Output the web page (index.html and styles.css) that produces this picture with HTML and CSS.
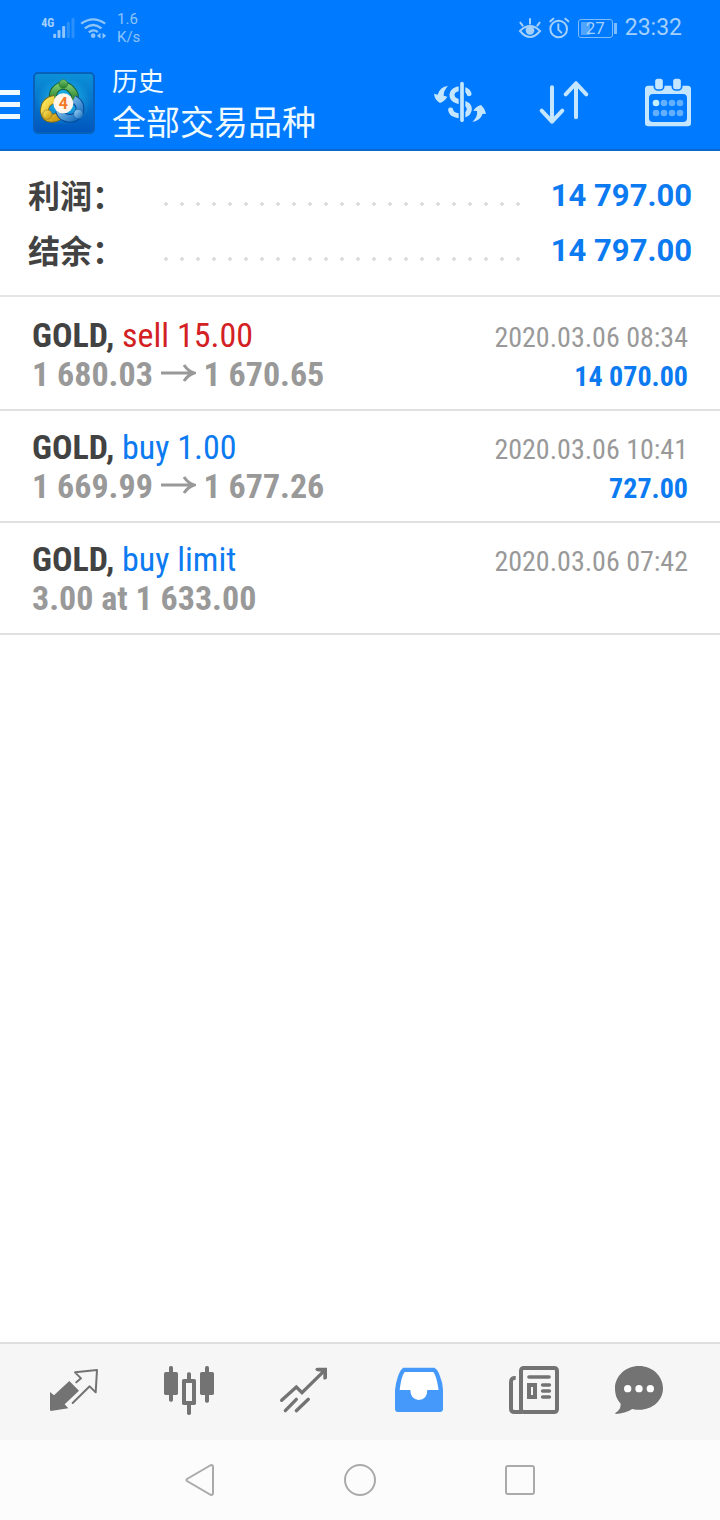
FILE: index.html
```html
<!DOCTYPE html>
<html lang="zh-CN">
<head>
<meta charset="utf-8">
<meta name="viewport" content="width=device-width, initial-scale=1">
<title>历史</title>
<link rel="stylesheet" href="styles.css">
</head>
<body>
<div class="screen">
  <header class="top">
    <div class="status">
      <div class="status-left">
        <svg class="status-signal" viewBox="120 48 200 66" width="67" height="22" aria-hidden="true">
          <g fill="#8fc4f8">
            <rect x="159" y="98" width="9" height="13" rx="3"/><rect x="172" y="87" width="9" height="24" rx="3"/><rect x="186" y="75" width="9" height="36" rx="3"/>
            <g opacity=".3"><rect x="200" y="63" width="9" height="48" rx="3"/><rect x="214" y="51" width="9" height="60" rx="3"/></g>
            <circle cx="279" cy="104" r="7"/>
            <path d="M290 104l11-9v18zM318 104l-11-9v18z"/>
          </g>
          <g fill="none" stroke="#8fc4f8" stroke-width="7"><path d="M243 68q36-26 72 0M254 82q25-20 50 0M266 94q13-11 27-1"/></g>
          <text class="net-type" x="123" y="78">4G</text>
        </svg>
        <div class="speed"><span>1.6</span><span>K/s</span></div>
      </div>
      <div class="status-right">
        <svg viewBox="291 51 156 66" width="52" height="22" aria-hidden="true">
          <g fill="none" stroke="#a4d0fa" stroke-width="6" stroke-linecap="round">
            <path d="M297 93q30-30 60 0q-30 36-60 0zM327 71V57M305 77l-7-9M349 77l7-9"/>
            <circle cx="413" cy="87" r="25"/><path d="M412 73v16l9 9M388 64l9-8M442 64l-9-8"/>
          </g>
          <circle cx="327" cy="91" r="13" fill="#a4d0fa"/>
        </svg>
        <div class="battery"><span>27</span></div>
        <time class="clock">23:32</time>
      </div>
    </div>
    <div class="appbar">
      <button class="menu" aria-label="菜单"><svg viewBox="0 0 20 30" width="20" height="30"><path fill="#effaff" d="M0 0h20v5H0zM0 12h20v5H0zM0 24h20v5H0z"/></svg></button>
      <svg class="logo" viewBox="0 0 186 186" width="62" height="62" aria-hidden="true">
        <defs>
          <linearGradient id="bg" x2="0" y2="1"><stop stop-color="#0b91d8"/><stop offset="1" stop-color="#0055bd"/></linearGradient>
          <radialGradient id="glow"><stop stop-color="#25c5ee"/><stop offset="1" stop-color="#25c5ee" stop-opacity="0"/></radialGradient>
          <linearGradient id="green" x2="0" y2="1"><stop stop-color="#76c66a"/><stop offset="1" stop-color="#237b28"/></linearGradient>
          <linearGradient id="gold" x2="1" y2="1"><stop stop-color="#ffe95d"/><stop offset="1" stop-color="#c7920a"/></linearGradient>
          <linearGradient id="blue" x2="1" y2="1"><stop stop-color="#a3d8f5"/><stop offset="1" stop-color="#1169be"/></linearGradient>
        </defs>
        <rect x="3" y="3" width="180" height="180" rx="12" fill="url(#bg)" stroke="#0860b8" stroke-width="6"/>
        <ellipse cx="92" cy="88" rx="82" ry="72" fill="url(#glow)"/>
        <path d="M61 84q-7-28 20-42q23-3 34 11q15 15 9 33" fill="none" stroke="#155d35" stroke-width="24"/>
        <path d="M61 84q-7-28 20-42q23-3 34 11q15 15 9 33" fill="none" stroke="url(#green)" stroke-width="18"/>
        <path d="M65 82q-30 5-31 36q3 20 21 21q24 0 31-21" fill="none" stroke="#806d15" stroke-width="26"/>
        <path d="M65 82q-30 5-31 36q3 20 21 21q24 0 31-21" fill="none" stroke="url(#gold)" stroke-width="21"/>
        <path d="M122 82q24 12 18 38q-10 20-32 19q-23-2-29-23" fill="none" stroke="#064796" stroke-width="26"/>
        <path d="M122 82q24 12 18 38q-10 20-32 19q-23-2-29-23" fill="none" stroke="url(#blue)" stroke-width="20"/>
        <circle cx="91" cy="36" r="13" fill="url(#green)" stroke="#357a3d" stroke-width="2"/>
        <circle cx="43" cy="128" r="14" fill="url(#gold)" stroke="#907a25" stroke-width="2"/>
        <circle cx="136" cy="126" r="14" fill="url(#blue)" stroke="#1664a8" stroke-width="2"/>
        <circle cx="91" cy="94" r="30" fill="#fff5eb"/>
        <text class="logo-digit" x="91" y="111">4</text>
      </svg>
      <div class="titles">
        <h1 class="title">历史</h1>
        <p class="subtitle">全部交易品种</p>
      </div>
      <div class="actions">
        <button class="action" aria-label="货币">
          <svg viewBox="36 234 168 144" width="56" height="48">
            <path fill="none" stroke="#c4e6ff" stroke-width="15" stroke-linecap="round" d="M147 281C142 262 98 260 96 284C95 314 148 299 148 327C146 355 96 353 92 330"/>
            <path d="M126 254V358" stroke="#007aff" stroke-width="20"/>
            <path d="M126 251V361" stroke="#c4e6ff" stroke-width="11" stroke-linecap="round"/>
            <path fill="#c4e6ff" d="M84 258Q60 260 53 284L42 281Q44 300 60 309Q75 303 82 290L71 287Q71 271 84 258zM157 366Q174 350 171 333L160 332Q169 318 183 315Q195 326 198 342L188 341Q181 362 157 366z"/>
          </svg>
        </button>
        <button class="action" aria-label="排序">
          <svg viewBox="354 234 156 144" width="52" height="48">
            <path fill="none" stroke="#c4e6ff" stroke-width="12" stroke-linecap="round" stroke-linejoin="round" d="M396 262V365M365 332L396 365L427 332M468 352V250M437 283L468 250L499 283"/>
          </svg>
        </button>
        <button class="action" aria-label="日期">
          <svg viewBox="672 231 144 147" width="48" height="49">
            <rect x="675" y="254" width="138" height="122" rx="10" fill="#c4e6ff"/>
            <rect x="687" y="279" width="114" height="84" rx="12" fill="#007aff"/>
            <g fill="#c4e6ff" stroke="#007aff" stroke-width="5"><rect x="703" y="231" width="28" height="36" rx="10"/><rect x="757" y="231" width="28" height="36" rx="10"/></g>
            <circle cx="708" cy="306" r="10" fill="#c4efff"/>
            <g fill="#62b0ff"><circle cx="732" cy="306" r="10"/><circle cx="756" cy="306" r="10"/><circle cx="780" cy="306" r="10"/><circle cx="708" cy="336" r="10"/><circle cx="732" cy="336" r="10"/><circle cx="756" cy="336" r="10"/><circle cx="780" cy="336" r="10"/></g>
          </svg>
        </button>
      </div>
    </div>
  </header>

  <main class="content">
    <dl class="summary">
      <div class="summary-row"><dt>利润：</dt><dd>14 797.00</dd></div>
      <div class="summary-row"><dt>结余：</dt><dd>14 797.00</dd></div>
    </dl>
    <ul class="deals">
      <li class="deal">
        <div class="line"><span class="name"><b>GOLD,</b> <span class="sell">sell 15.00</span></span><time class="date">2020.03.06 08:34</time></div>
        <div class="line"><span class="price">1 680.03 <svg class="arrow" viewBox="0 0 35 22" width="35" height="22" role="img" aria-label="→"><path d="M0 9H33M23 1Q27 7 33 9Q27 11 23 17"/></svg> 1 670.65</span><span class="profit">14 070.00</span></div>
      </li>
      <li class="deal">
        <div class="line"><span class="name"><b>GOLD,</b> <span class="buy">buy 1.00</span></span><time class="date">2020.03.06 10:41</time></div>
        <div class="line"><span class="price">1 669.99 <svg class="arrow" viewBox="0 0 35 22" width="35" height="22" role="img" aria-label="→"><path d="M0 9H33M23 1Q27 7 33 9Q27 11 23 17"/></svg> 1 677.26</span><span class="profit">727.00</span></div>
      </li>
      <li class="deal">
        <div class="line"><span class="name"><b>GOLD,</b> <span class="buy">buy limit</span></span><time class="date">2020.03.06 07:42</time></div>
        <div class="line"><span class="price">3.00 at 1 633.00</span></div>
      </li>
    </ul>
  </main>

  <nav class="tabs" aria-label="主导航">
    <button class="tab" aria-label="行情">
      <svg viewBox="144 108 156 150" width="52" height="50"><path fill="currentColor" d="M208 156L237 185L194 226L205 238L152 246L150 242V189L162 199z"/><path fill="none" stroke="currentColor" stroke-width="6" stroke-linejoin="round" stroke-linecap="round" d="M229 160L243 148L225 130L291 123L287 190L269 172L218 222"/></svg>
    </button>
    <button class="tab" aria-label="图表">
      <svg viewBox="489 105 156 153" width="52" height="51"><g fill="currentColor"><rect x="492" y="126" width="42" height="69" rx="5"/><rect x="507" y="108" width="12" height="107" rx="5"/><rect x="600" y="126" width="42" height="69" rx="5"/><rect x="615" y="108" width="12" height="110" rx="5"/><rect x="561" y="127" width="12" height="128" rx="5"/><rect x="546" y="147" width="42" height="78" rx="5"/></g><rect x="558" y="159" width="18" height="54" fill="#f6f6f6"/></svg>
    </button>
    <button class="tab" aria-label="交易">
      <svg viewBox="837 108 150 144" width="50" height="48"><path fill="none" stroke="currentColor" stroke-width="10" stroke-linecap="round" d="M845 211L889 171L906 188L974 121M856 242L889 208M889 242L925 208"/><path fill="currentColor" d="M946 117Q948 113 954 113H981V145Q976 151 970 147V126L952 124Q946 122 946 117z"/></svg>
    </button>
    <button class="tab active" aria-label="历史" aria-current="page">
      <svg viewBox="102 108 150 144" width="50" height="48"><path fill="currentColor" d="M130 113H223Q234 118 240 139Q249 160 249 180V238Q248 246 240 246H113Q105 245 105 237V180Q107 160 114 139Q121 118 130 113z"/><path fill="#fff" d="M134 126H220Q229 135 236 180H202Q202 209 176 210Q151 207 151 180H119Q124 138 134 126z"/></svg>
    </button>
    <button class="tab" aria-label="新闻">
      <svg viewBox="444 105 156 150" width="52" height="50"><g fill="none" stroke="currentColor" stroke-width="12"><rect x="483" y="114" width="108" height="132" rx="8"/><path d="M467 144Q453 143 453 156V236Q453 246 464 246H486"/><path stroke-width="11" stroke-linecap="round" d="M507 141H567M548 165H568M548 183H568M548 201H568"/><rect x="507" y="165" width="18" height="36"/></g></svg>
    </button>
    <button class="tab" aria-label="消息">
      <svg viewBox="762 105 150 150" width="50" height="50"><path fill="currentColor" d="M837 108C877 108 909 138 909 175C909 217 867 249 817 237Q795 251 766 252V249Q783 239 782 221C770 209 765 193 765 175C765 138 797 108 837 108z"/><g fill="#fff"><circle cx="803" cy="176" r="11"/><circle cx="837" cy="176" r="11"/><circle cx="871" cy="176" r="11"/></g></svg>
    </button>
  </nav>
  <nav class="sysnav" aria-label="系统导航">
    <button class="sys" aria-label="返回"><svg viewBox="0 0 34 34" width="34" height="34"><path d="M28 2L4 16Q3 17 4 18L28 32Q30 32 30 30V4Q30 2 28 2z"/></svg></button>
    <button class="sys" aria-label="主屏幕"><svg viewBox="0 0 34 34" width="34" height="34"><circle cx="17" cy="17" r="15"/></svg></button>
    <button class="sys" aria-label="最近任务"><svg viewBox="0 0 34 34" width="34" height="34"><rect x="3" y="3" width="28" height="28" rx="2"/></svg></button>
  </nav>
</div>
</body>
</html>
```
FILE: styles.css
```css
* { box-sizing: border-box; }
body, h1, p, dl, dd, ul { margin: 0; padding: 0; }
body {
  background: #fff;
  font-family: Roboto, "Noto Sans CJK SC", sans-serif;
}
button { border: 0; padding: 0; background: none; color: inherit; }
svg { display: block; }
.screen { display: flex; flex-direction: column; min-height: 100vh; }

/* Header */
.top { background: #007aff; border-bottom: 2px solid #0a68d0; }
.status {
  display: flex;
  justify-content: space-between;
  align-items: center;
  height: 56px;
  padding: 0 38px 0 40px;
  color: #a4d0fa;
}
.status-left, .status-right { display: flex; align-items: center; }
.status-left { gap: 10px; }
.status-right { gap: 8px; }
.net-type { font: bold 36px "Roboto Condensed", "Liberation Sans Narrow", sans-serif; fill: #a4d0fa; }
.speed { display: flex; flex-direction: column; font-size: 15px; line-height: 18px; color: #8fc4f8; }
.battery {
  position: relative;
  width: 35px;
  height: 19px;
  border: 1px solid #7dbcfb;
  border-radius: 3px;
  margin-right: 4px;
  font-size: 17px;
  line-height: 17px;
  text-align: center;
  background: linear-gradient(#4fa4fd, #4fa4fd) 2px 2px / 9px 13px no-repeat;
}
.battery::after {
  content: "";
  position: absolute;
  right: -5px;
  top: 3px;
  width: 3px;
  height: 11px;
  background: #7dbcfb;
}
.clock { font-size: 23px; line-height: 28px; }
.appbar { display: flex; align-items: center; height: 93px; }
.menu { padding-top: 4px; }
.logo { margin-left: 13px; }
.logo-digit { font: bold 48px Roboto, sans-serif; fill: #f07a28; text-anchor: middle; }
.titles { flex: 1; padding-top: 6px; margin-left: 17px; color: #effaff; }
.title { font-size: 26px; line-height: 34px; font-weight: 400; }
.subtitle { font-size: 34px; line-height: 48px; }
.actions { display: flex; }
.action { display: flex; justify-content: center; width: 104px; }

/* Totals */
.content { flex: 1; }
.summary { padding: 17px 28px; border-bottom: 2px solid #e4e4e4; }
.summary-row { display: flex; align-items: center; height: 55px; font-size: 31px; line-height: 55px; font-weight: 700; }
.summary-row dt { width: 130px; padding-top: 4px; font-size: 32px; color: #424242; }
.summary-row dd { display: flex; flex: 1; align-items: center; color: #0c7af0; white-space: nowrap; }
.summary-row dd::before {
  content: "";
  flex: 1;
  height: 4px;
  margin: 16px 28px 0 0;
  background: radial-gradient(circle, #dedede 2px, transparent 2px) 0 0 / 16px 4px repeat-x;
}

/* Deals */
.deals { padding-top: 2px; list-style: none; font-family: "Roboto Condensed", "Liberation Sans Narrow", sans-serif; }
.deal { height: 112px; padding: 17px 32px 15px; border-bottom: 2px solid #e0e0e0; }
.line { display: flex; justify-content: space-between; align-items: baseline; height: 39px; line-height: 39px; font-size: 34px; }
.name b { color: #424242; }
.sell { color: #d32023; }
.buy { color: #0c7af0; }
.date { font-size: 28px; color: #999; }
.price { font-weight: 700; color: #999; }
.arrow { display: inline-block; fill: none; stroke: #999; stroke-width: 3; }
.profit { font-size: 28px; font-weight: 700; color: #0c7af0; }

/* Bottom bars */
.tabs {
  display: grid;
  grid-template-columns: repeat(5, 115fr) 95fr;
  height: 98px;
  padding: 0 34px 4px 16px;
  border-top: 2px solid #dedede;
  background: #f6f6f6;
  color: #737373;
}
.tab { display: flex; align-items: center; justify-content: center; }
.tab.active { color: #4499fa; }
.sysnav { display: flex; justify-content: center; height: 80px; background: #fcfcfc; }
.sys { display: flex; align-items: center; justify-content: center; width: 160px; }
.sys svg { fill: none; stroke: #aaa; stroke-width: 2; }
```
